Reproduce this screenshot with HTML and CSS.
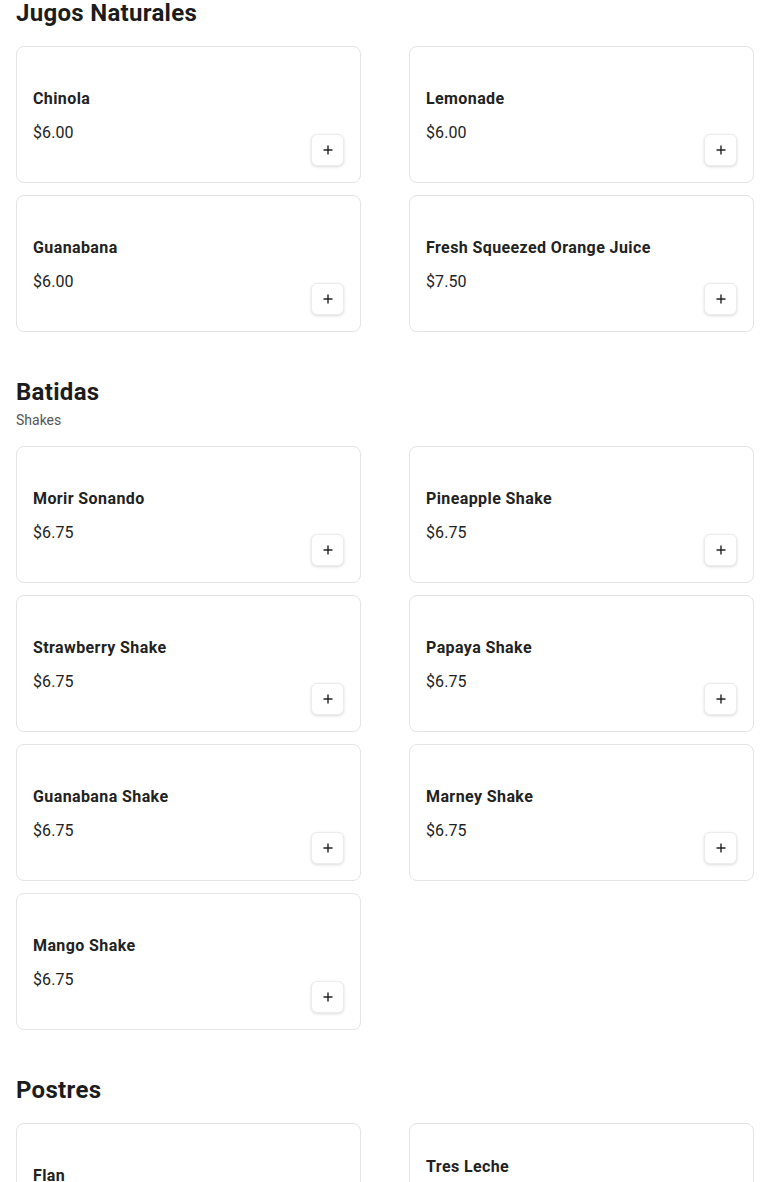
FILE: index.html
```html
<!DOCTYPE html>
<html lang="en">
  <head>
    <meta charset="UTF-8" />
    <meta name="viewport" content="width=device-width, initial-scale=1.0" />
    <title>Menu</title>
    <link rel="stylesheet" href="styles.css">
  </head>
  <body>
    <main class="menu">
      <section class="category">
        <h2>Jugos Naturales</h2>
        <div class="items">
          <div class="item">
            <div class="item-info">
              <h3>Chinola</h3>
              <p class="price">$6.00</p>
            </div>
            <button type="button" class="add-btn" aria-label="Add">
              <svg viewBox="0 0 12 12" width="12" height="12"><path d="M6 1.5v9M1.5 6h9" /></svg>
            </button>
          </div>
          <div class="item">
            <div class="item-info">
              <h3>Lemonade</h3>
              <p class="price">$6.00</p>
            </div>
            <button type="button" class="add-btn" aria-label="Add">
              <svg viewBox="0 0 12 12" width="12" height="12"><path d="M6 1.5v9M1.5 6h9" /></svg>
            </button>
          </div>
          <div class="item">
            <div class="item-info">
              <h3>Guanabana</h3>
              <p class="price">$6.00</p>
            </div>
            <button type="button" class="add-btn" aria-label="Add">
              <svg viewBox="0 0 12 12" width="12" height="12"><path d="M6 1.5v9M1.5 6h9" /></svg>
            </button>
          </div>
          <div class="item">
            <div class="item-info">
              <h3>Fresh Squeezed Orange Juice</h3>
              <p class="price">$7.50</p>
            </div>
            <button type="button" class="add-btn" aria-label="Add">
              <svg viewBox="0 0 12 12" width="12" height="12"><path d="M6 1.5v9M1.5 6h9" /></svg>
            </button>
          </div>
        </div>
      </section>

      <section class="category">
        <h2>Batidas</h2>
        <p class="subtitle">Shakes</p>
        <div class="items">
          <div class="item">
            <div class="item-info">
              <h3>Morir Sonando</h3>
              <p class="price">$6.75</p>
            </div>
            <button type="button" class="add-btn" aria-label="Add">
              <svg viewBox="0 0 12 12" width="12" height="12"><path d="M6 1.5v9M1.5 6h9" /></svg>
            </button>
          </div>
          <div class="item">
            <div class="item-info">
              <h3>Pineapple Shake</h3>
              <p class="price">$6.75</p>
            </div>
            <button type="button" class="add-btn" aria-label="Add">
              <svg viewBox="0 0 12 12" width="12" height="12"><path d="M6 1.5v9M1.5 6h9" /></svg>
            </button>
          </div>
          <div class="item">
            <div class="item-info">
              <h3>Strawberry Shake</h3>
              <p class="price">$6.75</p>
            </div>
            <button type="button" class="add-btn" aria-label="Add">
              <svg viewBox="0 0 12 12" width="12" height="12"><path d="M6 1.5v9M1.5 6h9" /></svg>
            </button>
          </div>
          <div class="item">
            <div class="item-info">
              <h3>Papaya Shake</h3>
              <p class="price">$6.75</p>
            </div>
            <button type="button" class="add-btn" aria-label="Add">
              <svg viewBox="0 0 12 12" width="12" height="12"><path d="M6 1.5v9M1.5 6h9" /></svg>
            </button>
          </div>
          <div class="item">
            <div class="item-info">
              <h3>Guanabana Shake</h3>
              <p class="price">$6.75</p>
            </div>
            <button type="button" class="add-btn" aria-label="Add">
              <svg viewBox="0 0 12 12" width="12" height="12"><path d="M6 1.5v9M1.5 6h9" /></svg>
            </button>
          </div>
          <div class="item">
            <div class="item-info">
              <h3>Marney Shake</h3>
              <p class="price">$6.75</p>
            </div>
            <button type="button" class="add-btn" aria-label="Add">
              <svg viewBox="0 0 12 12" width="12" height="12"><path d="M6 1.5v9M1.5 6h9" /></svg>
            </button>
          </div>
          <div class="item">
            <div class="item-info">
              <h3>Mango Shake</h3>
              <p class="price">$6.75</p>
            </div>
            <button type="button" class="add-btn" aria-label="Add">
              <svg viewBox="0 0 12 12" width="12" height="12"><path d="M6 1.5v9M1.5 6h9" /></svg>
            </button>
          </div>
        </div>
      </section>

      <section class="category">
        <h2>Postres</h2>
        <div class="items">
          <div class="item">
            <div class="item-info">
              <h3>Flan</h3>
              <p class="price">$5.00</p>
            </div>
            <button type="button" class="add-btn" aria-label="Add">
              <svg viewBox="0 0 12 12" width="12" height="12"><path d="M6 1.5v9M1.5 6h9" /></svg>
            </button>
          </div>
          <div class="item">
            <div class="item-info">
              <h3>Tres Leche</h3>
              <p class="desc">Homemade</p>
              <p class="price">$5.00</p>
            </div>
            <button type="button" class="add-btn" aria-label="Add">
              <svg viewBox="0 0 12 12" width="12" height="12"><path d="M6 1.5v9M1.5 6h9" /></svg>
            </button>
          </div>
        </div>
      </section>
    </main>
  </body>
</html>
```

FILE: styles.css
```css
body {
  font-family: Roboto, "Liberation Sans", Arial, sans-serif;
  margin: 0;
  padding: 0 16px;
  background: #fff;
  color: #1c1c1c;
}
.menu {
  margin-top: -3px;
}
.category {
  margin-bottom: 44px;
}
.category h2 {
  font-size: 24px;
  line-height: 32px;
  font-weight: 700;
  letter-spacing: 0.3px;
  margin: 0 0 17px;
  color: #1c1c1c;
}
.category .subtitle {
  font-size: 14px;
  line-height: 20px;
  color: #555;
  margin: -15px 0 16px;
}
.items {
  display: grid;
  grid-template-columns: 1fr 1fr;
  gap: 12px 48px;
  align-items: start;
}
.item {
  display: flex;
  justify-content: space-between;
  min-height: 137px;
  box-sizing: border-box;
  padding: 16px;
  border: 1px solid #e4e4e4;
  border-radius: 8px;
  background: #fff;
}
.item-info {
  align-self: center;
  padding-top: 3px;
}
.item h3 {
  font-size: 16px;
  line-height: 24px;
  font-weight: 700;
  letter-spacing: 0.4px;
  margin: 0 0 10px;
  color: #222;
}
.item .desc {
  font-size: 14px;
  line-height: 18px;
  margin: -8px 0 8px;
  color: #666;
}
.item .price {
  font-size: 16px;
  line-height: 24px;
  letter-spacing: 0.1px;
  margin: 0;
  color: #222;
}
.add-btn {
  align-self: flex-end;
  width: 33px;
  height: 32px;
  padding: 0;
  display: flex;
  align-items: center;
  justify-content: center;
  border: 1px solid #ececec;
  border-radius: 6px;
  background: #fff;
  box-shadow: 0 1px 3px rgba(0, 0, 0, 0.14);
  cursor: pointer;
}
.add-btn svg {
  stroke: #222;
  stroke-width: 1.4;
  fill: none;
}
```
